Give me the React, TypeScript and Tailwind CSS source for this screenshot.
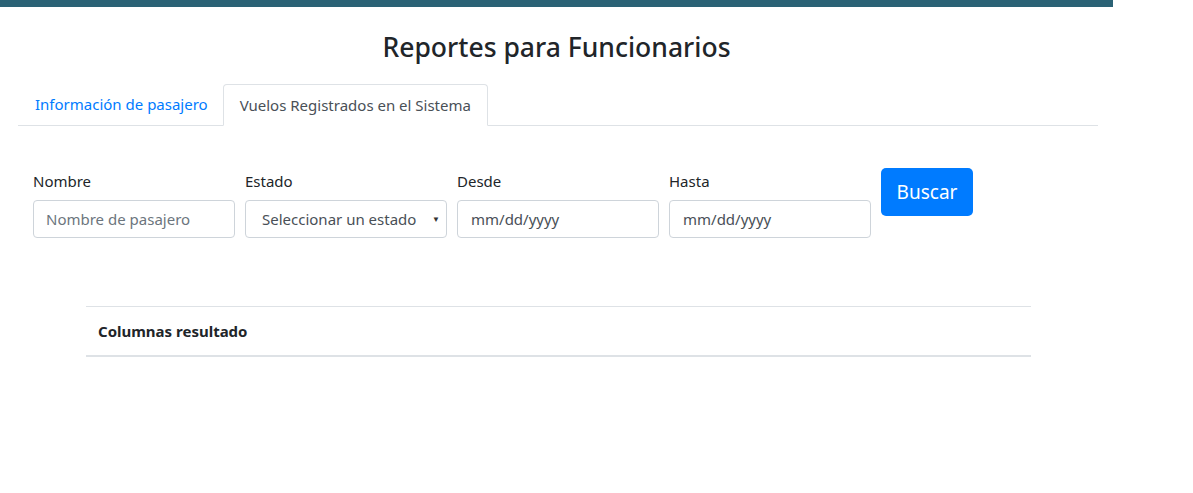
import React from "react";

export default function App() {
  const font = { fontFamily: '"Noto Sans", "Open Sans", sans-serif' };
  return (
    <div className="w-[1193px] h-[493px] bg-white text-[#212529]" style={font}>
      <div className="w-[1113px]">
        <div className="h-[7px] bg-[#2b6275]" />
        <h1 className="text-center text-[26.5px] font-medium leading-[1.2] mt-[25px] mb-[20px]">
          Reportes para Funcionarios
        </h1>
        <div className="ml-[18px] mr-[15px] flex border-b border-[#dee2e6] h-[42px] items-end">
          <div className="pl-[17px] pr-[15px] h-[41px] flex items-center text-[15px] text-[#007bff]">
            Información de pasajero
          </div>
          <div className="px-4 h-[42px] -mb-px flex items-center text-[15px] text-[#495057] bg-white border border-[#dee2e6] border-b-white rounded-t-[4px]">
            Vuelos Registrados en el Sistema
          </div>
        </div>
        <div className="flex items-start gap-[10px] pl-[33px] mt-[42px]">
          <div className="w-[202px]">
            <div className="text-[15px] leading-[24px] mt-[1px] mb-[7px]">Nombre</div>
            <div className="h-[38px] border border-[#ced4da] rounded-[4px] flex items-center px-3 text-[15px] text-[#6c757d]">
              Nombre de pasajero
            </div>
          </div>
          <div className="w-[202px]">
            <div className="text-[15px] leading-[24px] mt-[1px] mb-[7px]">Estado</div>
            <div className="h-[38px] border border-[#ced4da] rounded-[4px] flex items-center pl-4 pr-[6px] text-[15px] text-[#495057] justify-between">
              <span>Seleccionar un estado</span>
              <span className="text-[8px] text-[#333]">▼</span>
            </div>
          </div>
          <div className="w-[202px]">
            <div className="text-[15px] leading-[24px] mt-[1px] mb-[7px]">Desde</div>
            <div className="h-[38px] border border-[#ced4da] rounded-[4px] flex items-center px-[13px] text-[15px] text-[#495057]">
              mm/dd/yyyy
            </div>
          </div>
          <div className="w-[202px]">
            <div className="text-[15px] leading-[24px] mt-[1px] mb-[7px]">Hasta</div>
            <div className="h-[38px] border border-[#ced4da] rounded-[4px] flex items-center px-[13px] text-[15px] text-[#495057]">
              mm/dd/yyyy
            </div>
          </div>
          <div className="h-[48px] w-[92px] bg-[#007bff] rounded-[5px] text-white text-[19px] flex items-center justify-center">
            Buscar
          </div>
        </div>
        <div className="mx-[86px] w-[945px] mt-[68px]">
          <div className="border-t border-[#dee2e6] border-b-2 border-b-[#dee2e6] h-[51px] flex items-center px-3 text-[15px] font-bold">
            Columnas resultado
          </div>
        </div>
      </div>
    </div>
  );
}
